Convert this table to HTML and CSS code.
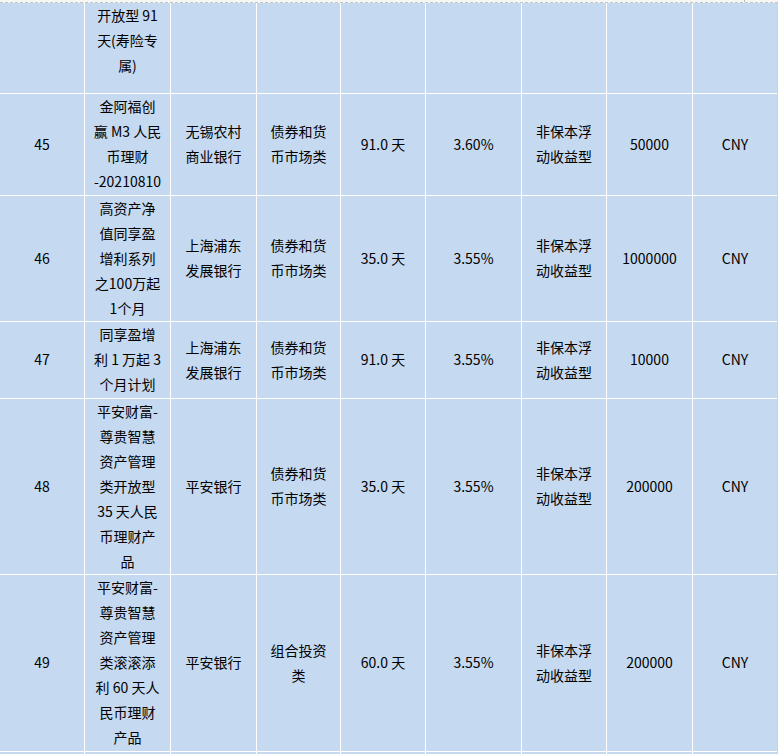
FILE: index.html
```html
<!DOCTYPE html>
<html lang="zh-CN">
<head>
<meta charset="utf-8">
<title>理财产品列表</title>
<link rel="stylesheet" href="styles.css">
</head>
<body>
<div class="topbar"><span class="tick"></span></div>
<div class="sheet">
  <div class="c top"></div>
  <div class="c top">开放型 91<br>天(寿险专<br>属)</div>
  <div class="c top"></div>
  <div class="c top"></div>
  <div class="c top"></div>
  <div class="c top"></div>
  <div class="c top"></div>
  <div class="c top"></div>
  <div class="c top"></div>

  <div class="c">45</div>
  <div class="c">金阿福创<br>赢 M3 人民<br>币理财<br>-20210810</div>
  <div class="c">无锡农村<br>商业银行</div>
  <div class="c">债券和货<br>币市场类</div>
  <div class="c">91.0 天</div>
  <div class="c">3.60%</div>
  <div class="c">非保本浮<br>动收益型</div>
  <div class="c">50000</div>
  <div class="c">CNY</div>

  <div class="c">46</div>
  <div class="c">高资产净<br>值同享盈<br>增利系列<br>之100万起<br>1个月</div>
  <div class="c">上海浦东<br>发展银行</div>
  <div class="c">债券和货<br>币市场类</div>
  <div class="c">35.0 天</div>
  <div class="c">3.55%</div>
  <div class="c">非保本浮<br>动收益型</div>
  <div class="c">1000000</div>
  <div class="c">CNY</div>

  <div class="c">47</div>
  <div class="c">同享盈增<br>利 1 万起 3<br>个月计划</div>
  <div class="c">上海浦东<br>发展银行</div>
  <div class="c">债券和货<br>币市场类</div>
  <div class="c">91.0 天</div>
  <div class="c">3.55%</div>
  <div class="c">非保本浮<br>动收益型</div>
  <div class="c">10000</div>
  <div class="c">CNY</div>

  <div class="c">48</div>
  <div class="c">平安财富-<br>尊贵智慧<br>资产管理<br>类开放型<br>35 天人民<br>币理财产<br>品</div>
  <div class="c">平安银行</div>
  <div class="c">债券和货<br>币市场类</div>
  <div class="c">35.0 天</div>
  <div class="c">3.55%</div>
  <div class="c">非保本浮<br>动收益型</div>
  <div class="c">200000</div>
  <div class="c">CNY</div>

  <div class="c">49</div>
  <div class="c">平安财富-<br>尊贵智慧<br>资产管理<br>类滚滚添<br>利 60 天人<br>民币理财<br>产品</div>
  <div class="c">平安银行</div>
  <div class="c">组合投资<br>类</div>
  <div class="c">60.0 天</div>
  <div class="c">3.55%</div>
  <div class="c">非保本浮<br>动收益型</div>
  <div class="c">200000</div>
  <div class="c">CNY</div>

  <div class="c"></div>
  <div class="c"></div>
  <div class="c"></div>
  <div class="c"></div>
  <div class="c"></div>
  <div class="c"></div>
  <div class="c"></div>
  <div class="c"></div>
  <div class="c"></div>
</div>
</body>
</html>
```

FILE: styles.css
```css
html, body {
  margin: 0;
  padding: 0;
  background: #ffffff;
  overflow: hidden;
}

body {
  font-family: "Noto Sans CJK SC", "Noto Sans", sans-serif;
  font-size: 14px;
  color: #000000;
}

.topbar {
  position: relative;
  height: 2px;
  background: #f6f6f6;
  border-bottom: 1px dashed #c4c4c4;
}

.tick {
  position: absolute;
  left: 744px;
  top: 0;
  width: 1px;
  height: 2px;
  background: #b8b8b8;
}

.sheet {
  display: grid;
  grid-template-columns: 84px 85px 85px 83px 84px 95px 84px 85px 84px;
  grid-template-rows: 90px repeat(5, auto) 30px;
  gap: 1px;
  width: max-content;
  background: #ffffff;
  border-right: 1px solid #cdd2d8;
}

.c {
  display: flex;
  align-items: center;
  justify-content: center;
  text-align: center;
  background: #c5d9f1;
  line-height: 25px;
  padding: 0.25px 2px;
  white-space: nowrap;
}

.c.top {
  align-items: flex-start;
  padding: 0 2px;
}
```
